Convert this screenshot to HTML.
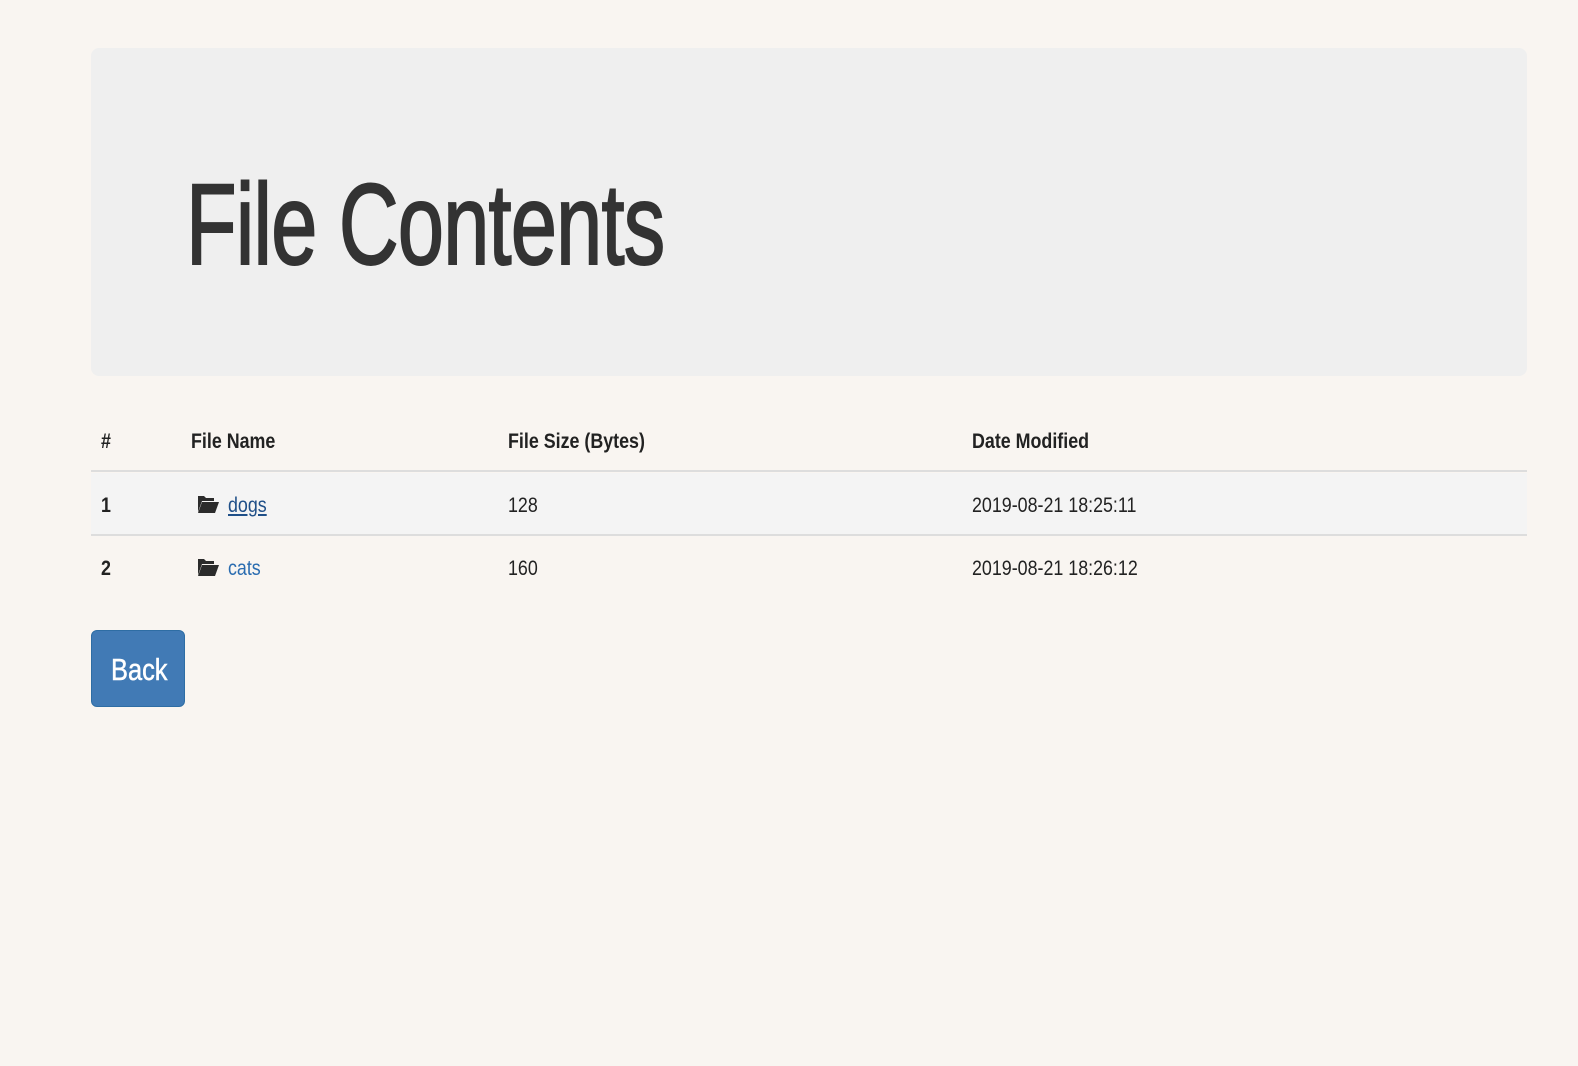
<!DOCTYPE html>
<html><head><meta charset="utf-8"><style>
body{margin:0;background:#f9f5f1;width:1578px;height:1066px;overflow:hidden;font-family:"Liberation Sans",sans-serif;color:#222;position:relative}
.j{position:absolute;left:91px;top:48px;width:1436px;height:328px;background:#efefef;border-radius:8px}
.h{position:absolute;left:186px;top:168px;font-size:115px;color:#333;line-height:115px;transform:scaleX(0.72);transform-origin:left;white-space:nowrap;letter-spacing:-1px;-webkit-text-stroke:2px #333}
.t{position:absolute;font-size:21px;white-space:nowrap;transform:scaleX(0.85);transform-origin:left;line-height:24px}
.b{font-weight:bold}
.line{position:absolute;left:91px;width:1436px;background:#ddd}
.row1{position:absolute;left:91px;top:473px;width:1436px;height:62px;background:#f4f4f4}
a{color:#2a6cb0}
.btn{position:absolute;left:91px;top:630px;width:92px;height:75px;background:#417ab5;border:1px solid #2e6da4;border-radius:6px}
.bt{position:absolute;left:111px;top:652px;color:#fff;font-size:31px;transform:scaleX(0.82);transform-origin:left;white-space:nowrap;-webkit-text-stroke:0.5px #fff}
svg{position:absolute}
</style></head><body>
<div class="j"></div>
<div class="h">File Contents</div>
<div class="t b" style="left:101px;top:430px">#</div>
<div class="t b" style="left:191px;top:430px">File Name</div>
<div class="t b" style="left:508px;top:430px">File Size (Bytes)</div>
<div class="t b" style="left:972px;top:430px">Date Modified</div>
<div class="row1"></div>
<div class="line" style="top:470px;height:2px"></div>
<div class="line" style="top:534px;height:2px"></div>
<div class="t b" style="left:101px;top:494px">1</div>
<svg style="left:197px;top:494px" width="22" height="20" viewBox="0 0 22 20"><path d="M1 2h6l2 2h8v3H5L1 18z" fill="#2b2b2b"/><path d="M5 8h17l-4 11H1z" fill="#2b2b2b"/></svg>
<div class="t" style="left:228px;top:494px"><a style="color:#1f4f88;text-decoration:underline">dogs</a></div>
<div class="t" style="left:508px;top:494px">128</div>
<div class="t" style="left:972px;top:494px">2019-08-21 18:25:11</div>
<div class="t b" style="left:101px;top:557px">2</div>
<svg style="left:197px;top:557px" width="22" height="20" viewBox="0 0 22 20"><path d="M1 2h6l2 2h8v3H5L1 18z" fill="#2b2b2b"/><path d="M5 8h17l-4 11H1z" fill="#2b2b2b"/></svg>
<div class="t" style="left:228px;top:557px"><a style="text-decoration:none">cats</a></div>
<div class="t" style="left:508px;top:557px">160</div>
<div class="t" style="left:972px;top:557px">2019-08-21 18:26:12</div>
<div class="btn"></div>
<div class="bt">Back</div>
</body></html>
